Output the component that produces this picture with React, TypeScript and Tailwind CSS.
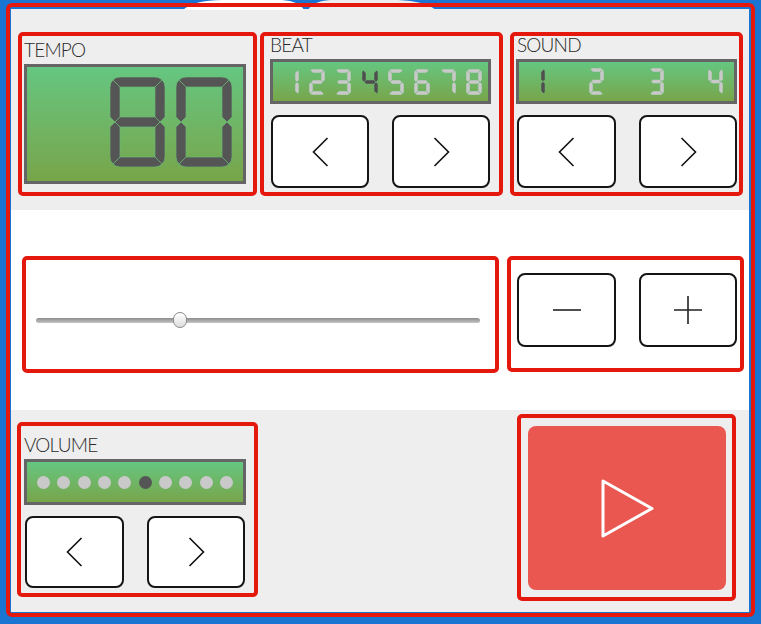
const LCD_BG = "border-[3px] border-[#656565] bg-linear-to-b from-[#64c680] to-[#77a549]";

const DIGIT_SEGS: Record<string, string> = {
    "0": "abcdef",
    "1": "bc",
    "2": "abged",
    "3": "abgcd",
    "4": "fgbc",
    "5": "afgcd",
    "6": "afgedc",
    "7": "abc",
    "8": "abcdefg",
};

function segPaths(W: number, H: number, t: number) {
    const k = t * 0.293;
    const m = H / 2;
    const h = t / 2;
    return {
        a: `M${k},${k} A${t} ${t} 0 0 1 ${t},0 L${W - t},0 A${t} ${t} 0 0 1 ${W - k},${k} L${W - t},${t} L${t},${t} Z`,
        b: `M${W - k},${k} A${t} ${t} 0 0 1 ${W},${t} L${W},${m - h} L${W - h},${m} L${W - t},${m - h} L${W - t},${t} Z`,
        c: `M${W - t},${m + h} L${W - h},${m} L${W},${m + h} L${W},${H - t} A${t} ${t} 0 0 1 ${W - k},${H - k} L${W - t},${H - t} Z`,
        d: `M${t},${H - t} L${W - t},${H - t} L${W - k},${H - k} A${t} ${t} 0 0 1 ${W - t},${H} L${t},${H} A${t} ${t} 0 0 1 ${k},${H - k} Z`,
        e: `M0,${m + h} L${h},${m} L${t},${m + h} L${t},${H - t} L${k},${H - k} A${t} ${t} 0 0 1 0,${H - t} Z`,
        f: `M${k},${k} L${t},${t} L${t},${m - h} L${h},${m} L0,${m - h} L0,${t} A${t} ${t} 0 0 1 ${k},${k} Z`,
        g: `M${h},${m} L${t},${m - h} L${W - t},${m - h} L${W - h},${m} L${W - t},${m + h} L${t},${m + h} Z`,
    } as Record<string, string>;
}

const SegDigit = ({ d, w, h, t, color }: { d: string; w: number; h: number; t: number; color: string }) => {
    const paths = segPaths(w, h, t);
    return (
        <svg width={w} height={h} viewBox={`0 0 ${w} ${h}`} className="shrink-0">
            {DIGIT_SEGS[d].split("").map((s) => (
                <path key={s} d={paths[s]} fill={color} stroke="#6cb878" strokeWidth={t > 6 ? 0.7 : 0.5} />
            ))}
        </svg>
    );
};

const Chevron = ({ dir }: { dir: "left" | "right" }) => (
    <svg width="17" height="30" viewBox="0 0 17 30">
        <path
            d={dir === "left" ? "M15.5,1 L1.5,15 L15.5,29" : "M1.5,1 L15.5,15 L1.5,29"}
            fill="none"
            stroke="#111"
            strokeWidth="1.6"
        />
    </svg>
);

const KeyButton = ({ w, h, children }: { w: string; h: string; children: React.ReactNode }) => (
    <button className={`${w} ${h} flex items-center justify-center rounded-[8px] border-2 border-[#151515] bg-white`}>
        {children}
    </button>
);

const Label = ({ text, className }: { text: string; className: string }) => (
    <div className={`h-[19px] text-[19px] leading-[19px] font-light tracking-[-0.8px] text-[#2a2a2a] ${className}`}>
        {text}
    </div>
);

const Frame = ({ className, children }: { className: string; children?: React.ReactNode }) => (
    <div className={`shrink-0 rounded-[5px] border-4 border-[#e5180e] ${className}`}>{children}</div>
);

export default function App() {
    const beat = 4;
    const sound = 1;
    const volume = 6;

    return (
        <div className="relative h-[624px] w-[761px] bg-[#1a75d2] pt-[3px] pr-[6px] pb-[7px] pl-[6px] font-['Lato','Liberation_Sans',sans-serif]">
            <svg className="pointer-events-none absolute top-0 left-0 z-10" width="761" height="10" viewBox="0 0 761 10">
                <path d="M183,10 Q194,0 222,0 L282,0 Q299,1 304,10 Z" fill="#fff" />
                <path d="M308,10 Q313,1 330,0 L398,0 Q425,1 436,10 Z" fill="#eeeeee" />
                <rect x="170" y="3" width="280" height="4" fill="#e5180e" />
            </svg>

            <div className="h-full w-full rounded-[6px] border-4 border-[#e5180e] bg-[#1a75d2] pt-[2px] pr-[2px] pb-[1px] pl-px">
                <div className="flex h-full w-full flex-col">
                    {/* top row */}
                    <div className="flex h-[201px] items-start bg-[#eeeeee] pt-[23px] pl-[7px]">
                        <Frame className="h-[164px] w-[239px]">
                            <div className="flex flex-col pt-[4px]">
                                <Label text="TEMPO" className="pl-[2px]" />
                                <div className={`mt-[5px] ml-[2px] flex h-[120px] w-[222px] items-center justify-end gap-[11px] pr-[11px] pb-[4px] ${LCD_BG}`}>
                                    <SegDigit d="8" w={55} h={90} t={10} color="#555555" />
                                    <SegDigit d="0" w={56} h={90} t={10} color="#555555" />
                                </div>
                            </div>
                        </Frame>

                        <Frame className="ml-[3px] h-[164px] w-[243px]">
                            <div className="-mt-px flex flex-col">
                                <Label text="BEAT" className="pl-[6px]" />
                                <div className={`mt-[5px] ml-[6px] flex h-[45px] w-[221px] items-center gap-[10.2px] pl-[10px] ${LCD_BG}`}>
                                    {["1", "2", "3", "4", "5", "6", "7", "8"].map((d, i) => (
                                        <SegDigit key={d} d={d} w={16} h={26} t={4} color={i + 1 === beat ? "#4f4f4f" : "#c9c9c9"} />
                                    ))}
                                </div>
                                <div className="mt-[11px] ml-[7px] flex gap-[23px]">
                                    <KeyButton w="w-[98px]" h="h-[73px]"><Chevron dir="left" /></KeyButton>
                                    <KeyButton w="w-[98px]" h="h-[73px]"><Chevron dir="right" /></KeyButton>
                                </div>
                            </div>
                        </Frame>

                        <Frame className="ml-[7px] h-[164px] w-[233px]">
                            <div className="-mt-px flex flex-col">
                                <Label text="SOUND" className="pl-[3px]" />
                                <div className={`mt-[5px] ml-[2px] flex h-[45px] w-[221px] items-center justify-between px-[11px] ${LCD_BG}`}>
                                    {["1", "2", "3", "4"].map((d, i) => (
                                        <SegDigit key={d} d={d} w={15} h={27} t={4} color={i + 1 === sound ? "#4f4f4f" : "#c9c9c9"} />
                                    ))}
                                </div>
                                <div className="mt-[11px] ml-[3px] flex gap-[23px]">
                                    <KeyButton w="w-[99px]" h="h-[73px]"><Chevron dir="left" /></KeyButton>
                                    <KeyButton w="w-[98px]" h="h-[73px]"><Chevron dir="right" /></KeyButton>
                                </div>
                            </div>
                        </Frame>
                    </div>

                    {/* tempo slider row */}
                    <div className="flex h-[200px] items-start bg-white pt-[46px] pl-[11px]">
                        <Frame className="flex h-[117px] w-[477px] items-center pt-[11px] pl-[10px]">
                            <div className="relative h-[5px] w-[444px] rounded-full bg-linear-to-b from-[#8c8c8c] to-[#c6c6c6]">
                                <div className="absolute top-[-6px] left-[137px] h-[16px] w-[14px] rounded-full border border-[#8a8a8a] bg-linear-to-b from-white to-[#dedede]" />
                            </div>
                        </Frame>
                        <Frame className="ml-[8px] h-[116px] w-[237px]">
                            <div className="mt-[13px] ml-[6px] flex gap-[23px]">
                                <KeyButton w="w-[99px]" h="h-[74px]">
                                    <svg width="30" height="30" viewBox="0 0 30 30">
                                        <path d="M1,15 L29,15" stroke="#222" strokeWidth="1.6" />
                                    </svg>
                                </KeyButton>
                                <KeyButton w="w-[98px]" h="h-[74px]">
                                    <svg width="30" height="30" viewBox="0 0 30 30">
                                        <path d="M1,15 L29,15 M15,1 L15,29" stroke="#222" strokeWidth="1.6" />
                                    </svg>
                                </KeyButton>
                            </div>
                        </Frame>
                    </div>

                    {/* bottom row */}
                    <div className="flex flex-1 items-start bg-[#eeeeee] pl-[6px]">
                        <Frame className="mt-[12px] h-[175px] w-[241px]">
                            <div className="flex flex-col pt-[9px]">
                                <Label text="VOLUME" className="pl-[3px]" />
                                <div className={`mt-[5px] ml-[3px] flex h-[46px] w-[222px] items-center justify-center gap-[7.4px] ${LCD_BG}`}>
                                    {Array.from({ length: 10 }).map((_, i) => (
                                        <div
                                            key={i}
                                            className={`h-[13px] w-[13px] rounded-full ${i + 1 === volume ? "bg-[#555555]" : "bg-[#c9c9c9]"}`}
                                        />
                                    ))}
                                </div>
                                <div className="mt-[11px] ml-[4px] flex gap-[23px]">
                                    <KeyButton w="w-[99px]" h="h-[72px]"><Chevron dir="left" /></KeyButton>
                                    <KeyButton w="w-[98px]" h="h-[72px]"><Chevron dir="right" /></KeyButton>
                                </div>
                            </div>
                        </Frame>

                        <Frame className="mt-[4px] ml-[259px] h-[187px] w-[219px]">
                            <button className="mt-[8px] ml-[7px] flex h-[164px] w-[198px] items-center justify-center rounded-[8px] bg-[#ea5750]">
                                <svg width="56" height="60" viewBox="0 0 56 60">
                                    <path d="M4,3 L4,58 L53,30.5 Z" fill="none" stroke="#fff" strokeWidth="3" strokeLinejoin="round" />
                                </svg>
                            </button>
                        </Frame>
                    </div>
                </div>
            </div>
        </div>
    );
}
